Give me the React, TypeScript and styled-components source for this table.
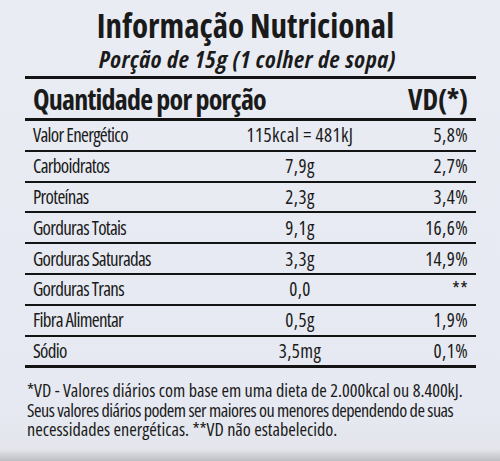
import React from "react";
import styled, { createGlobalStyle } from "styled-components";

const Global = createGlobalStyle`
  html, body { margin: 0; padding: 0; }
  body {
    width: 500px;
    height: 461px;
    overflow: hidden;
    background: #e7eaf1;
    font-family: "Open Sans", "DejaVu Sans", sans-serif;
    font-stretch: 75%;
    color: #1a1a1a;
  }
`;

const Page = styled.div`
  position: relative;
  width: 500px;
  height: 461px;
  background: linear-gradient(180deg, #e9ecf3 0%, #e6e9f1 90%, #e3e5eb 97.5%, #bcbec4 100%);
  box-sizing: border-box;
  padding: 0 24px 0 25px;
  display: flex;
  flex-direction: column;
  white-space: nowrap;
`;

const Title = styled.h1`
  margin: 8px 0 0;
  padding-right: 10px;
  text-align: center;
  font-size: 33px;
  line-height: 36px;
  font-weight: 700;
`;

const Subtitle = styled.div`
  padding-right: 6px;
  text-align: center;
  font-size: 24px;
  letter-spacing: 0.7px;
  line-height: 30px;
  font-style: italic;
  font-weight: 700;
  margin-bottom: 2px;
`;

const Rule = styled.div<{ $h: number }>`
  height: ${(p) => p.$h}px;
  background: #141414;
`;

const Header = styled.div`
  display: flex;
  justify-content: space-between;
  align-items: center;
  height: 39px;
  padding: 0 8px 0 8px;
  font-size: 28px;
  font-weight: 700;
`;

const HeaderLabel = styled.span`
  letter-spacing: -0.8px;
`;

const Table = styled.div`
  display: flex;
  flex-direction: column;
`;

const Row = styled.div<{ $last?: boolean }>`
  display: grid;
  grid-template-columns: 200px 134px 1fr;
  align-items: center;
  height: 28.8px;
  padding: 0 8px;
  border-bottom: ${(p) => (p.$last ? "3px" : "2px")} solid #141414;
`;

const Name = styled.span`
  text-align: left;
  font-size: 19px;
  letter-spacing: -0.7px;
`;

const Amount = styled.span`
  text-align: center;
  font-size: 19px;
  letter-spacing: 0.4px;
`;

const Vd = styled.span`
  text-align: right;
  font-size: 19px;
  letter-spacing: 0.4px;
`;

const Footer = styled.div`
  padding: 13px 4px 0 2px;
  font-size: 18.2px;
  line-height: 19.5px;
  display: flex;
  flex-direction: column;
`;

const FooterLine = styled.div<{ $spacing?: number }>`
  letter-spacing: ${(p) => p.$spacing ?? 0}px;
`;

const rows: [string, string, string][] = [
  ["Valor Energético", "115kcal = 481kJ", "5,8%"],
  ["Carboidratos", "7,9g", "2,7%"],
  ["Proteínas", "2,3g", "3,4%"],
  ["Gorduras Totais", "9,1g", "16,6%"],
  ["Gorduras Saturadas", "3,3g", "14,9%"],
  ["Gorduras Trans", "0,0", "**"],
  ["Fibra Alimentar", "0,5g", "1,9%"],
  ["Sódio", "3,5mg", "0,1%"],
];

export default function App() {
  return (
    <>
      <Global />
      <Page>
        <Title>Informação Nutricional</Title>
        <Subtitle>Porção de 15g (1 colher de sopa)</Subtitle>
        <Rule $h={3} />
        <Header>
          <HeaderLabel>Quantidade por porção</HeaderLabel>
          <span>VD(*)</span>
        </Header>
        <Rule $h={3} />
        <Table>
          {rows.map(([n, a, v], i) => (
            <Row key={n} $last={i === rows.length - 1}>
              <Name>{n}</Name>
              <Amount>{a}</Amount>
              <Vd>{v}</Vd>
            </Row>
          ))}
        </Table>
        <Footer>
          <FooterLine>*VD - Valores diários com base em uma dieta de 2.000kcal ou 8.400kJ.</FooterLine>
          <FooterLine $spacing={-0.5}>Seus valores diários podem ser maiores ou menores dependendo de suas</FooterLine>
          <FooterLine>necessidades energéticas. **VD não estabelecido.</FooterLine>
        </Footer>
      </Page>
    </>
  );
}
